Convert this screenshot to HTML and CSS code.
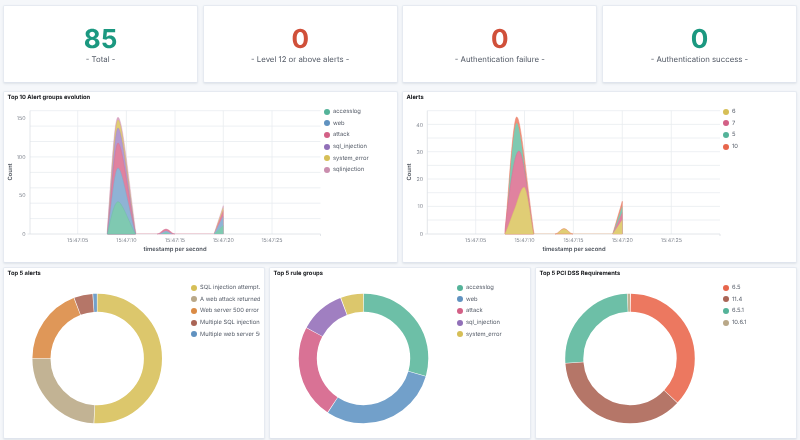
FILE: index.html
```html
<!DOCTYPE html>
<html lang="en">
<head>
<meta charset="utf-8">
<title>Security events dashboard</title>
<link rel="stylesheet" href="styles.css">
</head>
<body>
<main class="dash">
  <section class="row metrics">
    <div class="card metric"><div class="num ok">85</div><div class="lab">- Total -</div></div>
    <div class="card metric"><div class="num bad">0</div><div class="lab">- Level 12 or above alerts -</div></div>
    <div class="card metric"><div class="num bad">0</div><div class="lab">- Authentication failure -</div></div>
    <div class="card metric"><div class="num ok">0</div><div class="lab">- Authentication success -</div></div>
  </section>

  <section class="row two">
    <div class="card panel">
      <h2 class="title">Top 10 Alert groups evolution</h2>
      <div class="body">
        <svg class="area" viewBox="4 104 320 152" aria-label="Top 10 Alert groups evolution chart">
          <g class="grid">
            <path d="M30 110.7H320.5M30 126.1H320.5M30 141.5H320.5M30 156.9H320.5M30 172.4H320.5M30 187.8H320.5M30 203.2H320.5M30 218.6H320.5"/>
            <path d="M77.7 110.7V234M126.4 110.7V234M175 110.7V234M223.3 110.7V234M272 110.7V234"/>
          </g>
          <g class="axis"><path d="M30 110.7V234M27.5 234H320.5M320.5 234V236"/></g>
          <path class="base-a" d="M136 233.6H157M175 233.6H214"/>
          <path class="a6 s6" d="M107 234C110.5 190 114 117.3 118 117.3C122.5 117.3 128.500 178 136 234Z"/>
          <path class="a5 s5" d="M107.500 234C111 192 114.500 120 118 120C122 120 128 180 135.500 234Z"/>
          <path class="a4 s4" d="M107.500 234C111 195 114.500 128 118 128C122 128 128 185 135.500 234Z"/>
          <path class="a3 s3" d="M107.500 234C111 200 114.500 143 118 143C122 143 128 192 135.500 234Z"/>
          <path class="a2 s2" d="M107.500 234C111 208 114.500 168 118 168C122 168 128 205 135.500 234Z"/>
          <path class="a1 s1" d="M107.500 234C110 222 114 201.700 118 201.700C122 201.700 128 220 135.500 234Z"/>
          <path class="a3 s3" d="M157 234C160 234 163 229 166 229C169 229 172 234 175 234Z"/>
          <path class="a2" d="M159 234C161 234 163.500 231 166 231C168.500 231 171 234 173 234Z"/>
          <path class="a1" d="M161 234C163 234 164.500 232.500 166 232.500C167.500 232.500 169 234 171 234Z"/>
          <path class="a6 s6" d="M214 234L223.300 205.700V234Z"/>
          <path class="a5" d="M214 234L223.300 207V234Z"/>
          <path class="a3" d="M214 234L223.300 209.700V234Z"/>
          <path class="a2" d="M214 234L223.300 216V234Z"/>
          <path class="a1" d="M214 234L223.300 225V234Z"/>
          <g class="tick">
            <text x="25.500" y="120" text-anchor="end">150</text>
            <text x="25.500" y="159" text-anchor="end">100</text>
            <text x="25.500" y="197.300" text-anchor="end">50</text>
            <text x="25.500" y="236" text-anchor="end">0</text>
            <text x="77.700" y="242" text-anchor="middle">15:47:05</text>
            <text x="126.400" y="242" text-anchor="middle">15:47:10</text>
            <text x="175" y="242" text-anchor="middle">15:47:15</text>
            <text x="223.300" y="242" text-anchor="middle">15:47:20</text>
            <text x="272" y="242" text-anchor="middle">15:47:25</text>
          </g>
          <text class="axt" x="175" y="251.300" text-anchor="middle">timestamp per second</text>
          <text class="axt" transform="translate(11.500 172) rotate(-90)" text-anchor="middle">Count</text>
        </svg>
        <ul class="legend">
          <li><span class="dot d1"></span>accesslog</li>
          <li><span class="dot d2"></span>web</li>
          <li><span class="dot d3"></span>attack</li>
          <li><span class="dot d4"></span>sql_injection</li>
          <li><span class="dot d5"></span>system_error</li>
          <li><span class="dot d6"></span>sqlinjection</li>
        </ul>
      </div>
    </div>

    <div class="card panel">
      <h2 class="title">Alerts</h2>
      <div class="body">
        <svg class="area" viewBox="403 104 320 152" aria-label="Alerts chart">
          <g class="grid">
            <path d="M427.300 110.700H720M427.300 124.400H720M427.300 138H720M427.300 151.700H720M427.300 165.400H720M427.300 179H720M427.300 192.700H720M427.300 206.400H720M427.300 220H720"/>
            <path d="M475.700 110.700V234M524.500 110.700V234M573.400 110.700V234M622.300 110.700V234M671.300 110.700V234"/>
          </g>
          <g class="axis"><path d="M427.300 110.700V234M425 234H720M720 234V236"/></g>
          <path class="base-b" d="M534 233.600H555M573 233.600H612.700"/>
          <path class="a7 s7" d="M505 234C508 200 513 117 516.700 117C521 117 527 185 534 234Z"/>
          <path class="a1" d="M505.500 234C508.500 202 513 123 516.700 123C520.500 123 526.500 188 533.500 234Z"/>
          <path class="a3 s3" d="M505 229C509 195 514 151 519 151C523 151 528 195 533.500 234H505Z"/>
          <path class="a5 s5" d="M505 234C509 225 512 215 515 208C518 200 521 187.300 524 187.300C527 187.300 530 215 533.500 234Z"/>
          <path class="a5 s7" d="M555 234C558 234 561 228.500 564 228.500C567 228.500 570 234 573 234Z"/>
          <path class="a7 s7" d="M612.700 234L622.300 201.300V234Z"/>
          <path class="a1" d="M612.700 234L622.300 206V234Z"/>
          <path class="a3" d="M612.700 234L622.300 212V234Z"/>
          <path class="a5" d="M612.700 234L622.300 219.700V234Z"/>
          <g class="tick">
            <text x="423" y="126.700" text-anchor="end">40</text>
            <text x="423" y="154" text-anchor="end">30</text>
            <text x="423" y="181.200" text-anchor="end">20</text>
            <text x="423" y="208.400" text-anchor="end">10</text>
            <text x="423" y="235.700" text-anchor="end">0</text>
            <text x="475.700" y="242" text-anchor="middle">15:47:05</text>
            <text x="524.500" y="242" text-anchor="middle">15:47:10</text>
            <text x="573.400" y="242" text-anchor="middle">15:47:15</text>
            <text x="622.300" y="242" text-anchor="middle">15:47:20</text>
            <text x="671.300" y="242" text-anchor="middle">15:47:25</text>
          </g>
          <text class="axt" x="574" y="251.300" text-anchor="middle">timestamp per second</text>
          <text class="axt" transform="translate(411 172) rotate(-90)" text-anchor="middle">Count</text>
        </svg>
        <ul class="legend">
          <li><span class="dot d5"></span>6</li>
          <li><span class="dot d3"></span>7</li>
          <li><span class="dot d1"></span>5</li>
          <li><span class="dot d7"></span>10</li>
        </ul>
      </div>
    </div>
  </section>

  <section class="row three">
    <div class="card panel">
      <h2 class="title">Top 5 alerts</h2>
      <div class="body">
        <svg class="pie" viewBox="4 280 187 157" aria-label="Top 5 alerts donut">
          <g class="ring" transform="rotate(-90 97.200 358.500)">
            <circle class="p5" cx="97.200" cy="358.500" r="55.750" pathLength="360" stroke-dasharray="182.400 360" stroke-dashoffset="-0.300"/>
            <circle class="p8" cx="97.200" cy="358.500" r="55.750" pathLength="360" stroke-dasharray="86.400 360" stroke-dashoffset="-183.300"/>
            <circle class="p9" cx="97.200" cy="358.500" r="55.750" pathLength="360" stroke-dasharray="68.400 360" stroke-dashoffset="-270.300"/>
            <circle class="p10" cx="97.200" cy="358.500" r="55.750" pathLength="360" stroke-dasharray="16.400 360" stroke-dashoffset="-339.300"/>
            <circle class="p2" cx="97.200" cy="358.500" r="55.750" pathLength="360" stroke-dasharray="3.400 360" stroke-dashoffset="-356.300"/>
          </g>
        </svg>
        <ul class="legend clip">
          <li><span class="dot d5"></span>SQL injection attempt.</li>
          <li><span class="dot d8"></span>A web attack returned code 200 (success).</li>
          <li><span class="dot d9"></span>Web server 500 error code (Internal Error).</li>
          <li><span class="dot d10"></span>Multiple SQL injection attempts from same source ip.</li>
          <li><span class="dot d2"></span>Multiple web server 500 error code (Internal Error).</li>
        </ul>
      </div>
    </div>

    <div class="card panel">
      <h2 class="title">Top 5 rule groups</h2>
      <div class="body">
        <svg class="pie" viewBox="270 280 187 157" aria-label="Top 5 rule groups donut">
          <g class="ring" transform="rotate(-90 363.500 358.500)">
            <circle class="p1" cx="363.500" cy="358.500" r="55.750" pathLength="360" stroke-dasharray="105.400 360" stroke-dashoffset="-0.300"/>
            <circle class="p2" cx="363.500" cy="358.500" r="55.750" pathLength="360" stroke-dasharray="106.900 360" stroke-dashoffset="-106.300"/>
            <circle class="p3" cx="363.500" cy="358.500" r="55.750" pathLength="360" stroke-dasharray="84.200 360" stroke-dashoffset="-213.800"/>
            <circle class="p4" cx="363.500" cy="358.500" r="55.750" pathLength="360" stroke-dasharray="40.400 360" stroke-dashoffset="-298.600"/>
            <circle class="p5" cx="363.500" cy="358.500" r="55.750" pathLength="360" stroke-dasharray="20 360" stroke-dashoffset="-339.700"/>
          </g>
        </svg>
        <ul class="legend">
          <li><span class="dot d1"></span>accesslog</li>
          <li><span class="dot d2"></span>web</li>
          <li><span class="dot d3"></span>attack</li>
          <li><span class="dot d4"></span>sql_injection</li>
          <li><span class="dot d5"></span>system_error</li>
        </ul>
      </div>
    </div>

    <div class="card panel">
      <h2 class="title">Top 5 PCI DSS Requirements</h2>
      <div class="body">
        <svg class="pie" viewBox="536 280 187 157" aria-label="Top 5 PCI DSS Requirements donut">
          <g class="ring" transform="rotate(-90 630 358.500)">
            <circle class="p7" cx="630" cy="358.500" r="55.750" pathLength="360" stroke-dasharray="132 360" stroke-dashoffset="-0.800"/>
            <circle class="p10" cx="630" cy="358.500" r="55.750" pathLength="360" stroke-dasharray="132.100 360" stroke-dashoffset="-133.300"/>
            <circle class="p1" cx="630" cy="358.500" r="55.750" pathLength="360" stroke-dasharray="91.300 360" stroke-dashoffset="-265.900"/>
            <circle class="p8" cx="630" cy="358.500" r="55.750" pathLength="360" stroke-dasharray="2.500 360" stroke-dashoffset="-357.700"/>
          </g>
        </svg>
        <ul class="legend">
          <li><span class="dot d7"></span>6.5</li>
          <li><span class="dot d10"></span>11.4</li>
          <li><span class="dot d1"></span>6.5.1</li>
          <li><span class="dot d8"></span>10.6.1</li>
        </ul>
      </div>
    </div>
  </section>
</main>
</body>
</html>
```

FILE: styles.css
```css
* { box-sizing: border-box; }
html, body { margin: 0; padding: 0; }
body {
  width: 800px;
  height: 440px;
  overflow: hidden;
  background: #f5f7fa;
  font-family: Inter, "Liberation Sans", sans-serif;
  text-rendering: geometricPrecision;
}
.dash { padding: 5px 3px 0; display: flex; flex-direction: column; filter: blur(.3px); }
.row { display: grid; }
.metrics { grid-template-columns: repeat(4, 1fr); column-gap: 4.5px; height: 77.5px; margin-bottom: 8px; }
.two { grid-template-columns: repeat(2, 1fr); column-gap: 4px; height: 172px; margin-bottom: 4px; }
.three { grid-template-columns: repeat(3, 1fr); column-gap: 4px; height: 172px; }

.card {
  background: #fff;
  border: 1px solid #e6eaf1;
  border-bottom-color: #dfe4ed;
  border-radius: 2px;
  box-shadow: 0 1px 2px rgba(152, 162, 179, .22);
  min-width: 0;
}
.metric { display: flex; flex-direction: column; align-items: center; justify-content: center; padding-top: 2px; }
.num { font-size: 26px; line-height: 30px; font-weight: 700; }
.ok { color: #1b9880; }
.bad { color: #d0503a; }
.lab { font-size: 7.800px; line-height: 11px; color: #535a66; margin-top: -1px; }

.panel { display: flex; flex-direction: column; overflow: hidden; }
.title { margin: 0 0 1.500px; padding: 0 3.500px; font-size: 5.800px; line-height: 11px; font-weight: 700; color: #14161a; }
.body { display: flex; flex: 1; min-height: 0; }
.area { display: block; width: 320px; height: 152px; flex: none; }
.pie { display: block; width: 187px; height: 157px; flex: none; }

.legend { list-style: none; margin: 0; padding: 1.800px 0 0; min-width: 0; flex: 1; }
.legend li { display: flex; align-items: center; height: 11.650px; font-size: 5.800px; color: #535a66; white-space: nowrap; overflow: hidden; }
.clip { padding-right: 4.500px; }
.dot { flex: none; width: 6px; height: 6px; border-radius: 50%; margin-right: 3px; }
.d1 { background: #54b399; }
.d2 { background: #6092c0; }
.d3 { background: #d36086; }
.d4 { background: #9170b8; }
.d5 { background: #d6bf57; }
.d6 { background: #ca8eae; }
.d7 { background: #e7664c; }
.d8 { background: #b9a888; }
.d9 { background: #da8b45; }
.d10 { background: #aa6556; }

.grid path { fill: none; stroke: #e9ecf0; stroke-width: .8; }
.axis path { fill: none; stroke: #dcdfe5; stroke-width: .8; }
.tick text { font-size: 5.300px; fill: #7f848e; }
.axt { font-size: 5.850px; font-weight: 600; fill: #50565f; }
.base-a { fill: none; stroke: #ecc9d3; stroke-width: .9; }
.base-b { fill: none; stroke: #eed9c8; stroke-width: .9; }

.a1 { fill: #7fc9b1; }
.a2 { fill: #8fb3d5; }
.a3 { fill: #e0829f; }
.a4 { fill: #b49bd0; }
.a5 { fill: #e0cd75; }
.a6 { fill: #dba8c6; }
.a7 { fill: #ef8f79; }
.s1 { stroke: #6dbba2; stroke-width: .4; }
.s2 { stroke: #7ea5cb; stroke-width: .4; }
.s3 { stroke: #d36f93; stroke-width: .4; }
.s4 { stroke: #a487c6; stroke-width: .4; }
.s5 { stroke: #d9c364; stroke-width: .4; }
.s6 { stroke: #d39bbb; stroke-width: .4; }
.s7 { stroke: #e97d66; stroke-width: .5; }

.ring circle { fill: none; stroke-width: 18.100; }
.p1 { stroke: #6dbfa7; }
.p2 { stroke: #72a0ca; }
.p3 { stroke: #d97295; }
.p4 { stroke: #a07fc1; }
.p5 { stroke: #dcc76c; }
.p7 { stroke: #ec7860; }
.p8 { stroke: #c2b394; }
.p9 { stroke: #df9758; }
.p10 { stroke: #b57668; }
```
